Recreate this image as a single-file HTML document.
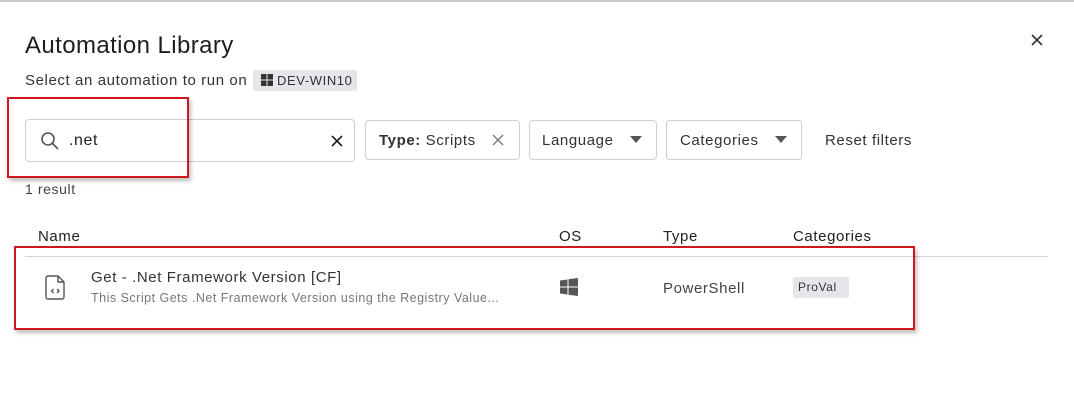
<!DOCTYPE html><html><head><style>
body{margin:0;width:1074px;height:404px;background:#fff;font-family:"Liberation Sans",sans-serif;color:#222;position:relative;overflow:hidden;letter-spacing:.6px}
.a{position:absolute;white-space:nowrap}
.box{position:absolute;border:1px solid #cfcfd4;border-radius:4px;box-sizing:border-box}
.red{position:absolute;border:2px solid #d0161e;box-shadow:2px 3px 4px rgba(0,0,0,.25);box-sizing:border-box}
.tri{display:inline-block;width:0;height:0;border-left:6px solid transparent;border-right:6px solid transparent;border-top:7px solid #555}
</style></head><body>
<div class="a" style="left:0;top:0;width:1074px;height:2px;background:#c8c8c8"></div>
<div class="a" style="left:25px;top:32px;font-size:24px;color:#1e1e1e;letter-spacing:.4px">Automation Library</div>
<svg class="a" style="left:1031px;top:34px" width="12" height="12" viewBox="0 0 12 12"><path d="M1 1l10 10M11 1L1 11" stroke="#333" stroke-width="1.6"/></svg>
<div class="a" style="left:25px;top:72px;font-size:15px;color:#333">Select an automation to run on</div>
<div class="a" style="left:253px;top:70px;width:104px;height:21px;background:#e4e6ea;border-radius:2px"></div>
<svg class="a" style="left:261px;top:74px" width="12" height="12" viewBox="0 0 12 12"><path d="M0 0h5.5v5.5H0zM6.5 0H12v5.5H6.5zM0 6.5h5.5V12H0zM6.5 6.5H12V12H6.5z" fill="#333"/></svg>
<div class="a" style="left:277px;top:73px;font-size:13px;color:#333">DEV-WIN10</div>
<div class="box" style="left:25px;top:119px;width:330px;height:43px"></div>
<svg class="a" style="left:40px;top:131px" width="20" height="20" viewBox="0 0 20 20"><circle cx="8" cy="8" r="6" fill="none" stroke="#555" stroke-width="1.6"/><path d="M12.5 12.5L18 18" stroke="#555" stroke-width="1.6"/></svg>
<div class="a" style="left:69px;top:132px;font-size:16px;color:#222">.net</div>
<svg class="a" style="left:331px;top:135px" width="12" height="12" viewBox="0 0 12 12"><path d="M1 1l10 10M11 1L1 11" stroke="#222" stroke-width="1.6"/></svg>
<div class="box" style="left:365px;top:120px;width:155px;height:40px"></div>
<div class="a" style="left:379px;top:132px;font-size:15px;color:#333"><b>Type:</b> Scripts</div>
<svg class="a" style="left:492px;top:134px" width="12" height="12" viewBox="0 0 12 12"><path d="M1 1l10 10M11 1L1 11" stroke="#777" stroke-width="1.4"/></svg>
<div class="box" style="left:529px;top:120px;width:128px;height:40px"></div>
<div class="a" style="left:542px;top:132px;font-size:15px;color:#333">Language</div>
<div class="a" style="left:630px;top:130px"><span class="tri"></span></div>
<div class="box" style="left:666px;top:120px;width:136px;height:40px"></div>
<div class="a" style="left:680px;top:132px;font-size:15px;color:#333">Categories</div>
<div class="a" style="left:775px;top:130px"><span class="tri"></span></div>
<div class="a" style="left:825px;top:132px;font-size:15px;color:#333">Reset filters</div>
<div class="red" style="left:7px;top:97px;width:182px;height:81px"></div>
<div class="a" style="left:25px;top:181px;font-size:14px;color:#444">1 result</div>
<div class="a" style="left:38px;top:228px;font-size:15px;color:#222">Name</div>
<div class="a" style="left:559px;top:228px;font-size:15px;color:#222">OS</div>
<div class="a" style="left:663px;top:228px;font-size:15px;color:#222">Type</div>
<div class="a" style="left:793px;top:228px;font-size:15px;color:#222">Categories</div>
<div class="a" style="left:25px;top:256px;width:1023px;height:1px;background:#d4d4d8"></div>
<svg class="a" style="left:44px;top:274px" width="24" height="27" viewBox="0 0 24 27"><path d="M4 2h10l6 6v15a2 2 0 0 1-2 2H4a2 2 0 0 1-2-2V4a2 2 0 0 1 2-2zM14 2v6h6" fill="none" stroke="#555" stroke-width="1.4" stroke-linejoin="round"/><path d="M9.5 15l-2 2 2 2M13 15l2 2-2 2" fill="none" stroke="#555" stroke-width="1.3"/></svg>
<div class="a" style="left:91px;top:269px;font-size:15px;color:#333">Get - .Net Framework Version [CF]</div>
<div class="a" style="left:91px;top:291px;font-size:12.5px;color:#777;letter-spacing:.5px">This Script Gets .Net Framework Version using the Registry Value...</div>
<svg class="a" style="left:560px;top:278px" width="18" height="18" viewBox="0 0 18 18"><path d="M0 2.5l7.5-1v7H0zM8.5 1.3L18 0v8.5H8.5zM0 9.5h7.5v7l-7.5-1zM8.5 9.5H18V18l-9.5-1.3z" fill="#555"/></svg>
<div class="a" style="left:663px;top:280px;font-size:15px;color:#444">PowerShell</div>
<div class="a" style="left:793px;top:277px;width:56px;height:21px;background:#e4e6ea;border-radius:2px"></div>
<div class="a" style="left:798px;top:280px;font-size:12px;color:#333">ProVal</div>
<div class="red" style="left:14px;top:246px;width:901px;height:84px"></div>
</body></html>
